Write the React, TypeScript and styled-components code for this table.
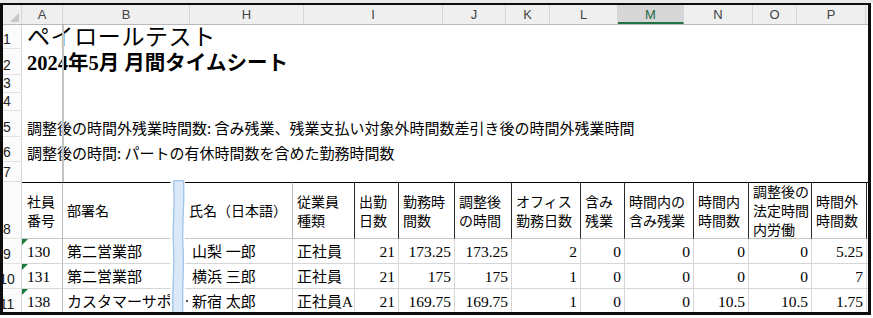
import styled, { createGlobalStyle } from 'styled-components';

const SANS = `"Liberation Sans", "Noto Sans CJK JP", sans-serif`;
const JP = `"Noto Sans CJK JP", sans-serif`;
const SERIF = `"Liberation Serif", "Noto Sans CJK JP", serif`;

const COLUMNS = [
  { label: 'A', w: 41 },
  { label: 'B', w: 127 },
  { label: 'H', w: 114 },
  { label: 'I', w: 139 },
  { label: 'J', w: 63 },
  { label: 'K', w: 44 },
  { label: 'L', w: 68 },
  { label: 'M', w: 66, active: true },
  { label: 'N', w: 69 },
  { label: 'O', w: 44 },
  { label: 'P', w: 69 },
];

const TOP_ROWS = [
  { n: 1, h: 24, kind: 'title', text: 'ペイロールテスト' },
  { n: 2, h: 26, kind: 'sub', text: '2024年5月 月間タイムシート' },
  { n: 3, h: 18 },
  { n: 4, h: 18 },
  {
    n: 5,
    h: 26,
    kind: 'note',
    text: '調整後の時間外残業時間数: 含み残業、残業支払い対象外時間数差引き後の時間外残業時間',
  },
  { n: 6, h: 25, kind: 'note', text: '調整後の時間: パートの有休時間数を含めた勤務時間数' },
  { n: 7, h: 20 },
];

const HEADERS = [
  { text: '社員\n番号', strong: false },
  { text: '部署名', strong: false },
  { text: '氏名（日本語）', strong: false },
  { text: '従業員\n種類', strong: true },
  { text: '出勤\n日数', strong: true },
  { text: '勤務時\n間数', strong: true },
  { text: '調整後\nの時間', strong: true },
  { text: 'オフィス\n勤務日数', strong: true },
  { text: '含み\n残業', strong: true },
  { text: '時間内の\n含み残業', strong: true },
  { text: '時間内\n時間数', strong: true },
  { text: '調整後の\n法定時間\n内労働', strong: true },
  { text: '時間外\n時間数', strong: true },
];

const ROWS = [
  {
    n: 9,
    id: '130',
    dept: '第二営業部',
    name: '山梨 一郎',
    type: '正社員',
    nums: ['21', '173.25', '173.25', '2', '0', '0', '0', '0', '5.25'],
  },
  {
    n: 10,
    id: '131',
    dept: '第二営業部',
    name: '横浜 三郎',
    type: '正社員',
    nums: ['21', '175', '175', '1', '0', '0', '0', '0', '7'],
  },
  {
    n: 11,
    id: '138',
    dept: 'カスタマーサポート',
    name: '新宿 太郎',
    type: '正社員A',
    nums: ['21', '169.75', '169.75', '1', '0', '0', '10.5', '10.5', '1.75'],
    cut: true,
  },
];

function Band() {
  return (
    <BandCol>
      <svg width="14" height="100%" viewBox="0 0 14 134" preserveAspectRatio="none">
        <path
          d="M2.5 1.5 Q2.5 0.5 4 0.5 L11 0.5 Q12.5 0.5 12.5 1.5 C14 24 10.5 44 12 67 C13.5 90 10.5 112 12 134 L2 134 C0.5 112 4 90 2.5 67 C1 44 4.5 24 2.5 1.5 Z"
          fill="#dbe8f7"
          stroke="#9fc4ea"
          strokeWidth="1.3"
        />
      </svg>
    </BandCol>
  );
}

function App() {
  return (
    <Page>
      <GlobalStyle />
      <Frame>
        <ColHeaderRow>
          <Corner />
          {COLUMNS.map((c) => (
            <ColHead key={c.label} $w={c.w} $active={!!c.active}>
              {c.label}
            </ColHead>
          ))}
          <ColHeadRest />
        </ColHeaderRow>

        <TopArea>
          {TOP_ROWS.map((r) => (
            <TopRow key={r.n} $h={r.h}>
              <RowHead>
                <RowNum>{r.n}</RowNum>
              </RowHead>
              {r.kind === 'title' && <Title>{r.text}</Title>}
              {r.kind === 'sub' && <SubTitle>{r.text}</SubTitle>}
              {r.kind === 'note' && <Note>{r.text}</Note>}
              {!r.kind && <div />}
            </TopRow>
          ))}
        </TopArea>

        <Table>
          <RowHead>
            <RowNum>8</RowNum>
          </RowHead>
          <HeadCell $strong={false} $first>
            {HEADERS[0].text}
          </HeadCell>
          <HeadCell $strong={false} $noRight>
            {HEADERS[1].text}
          </HeadCell>
          <Band />
          {HEADERS.slice(2).map((h) => (
            <HeadCell key={h.text} $strong={h.strong}>
              {h.text}
            </HeadCell>
          ))}
          <HeadRest />

          {ROWS.map((r) => (
            <Row key={r.n} r={r} />
          ))}
        </Table>
      </Frame>
    </Page>
  );
}

function Row({ r }: { r: (typeof ROWS)[number] }) {
  return (
    <>
      <RowHead>
        <RowNum>{r.n}</RowNum>
      </RowHead>
      <IdCell>{r.id}</IdCell>
      <TextCell $noRight>{r.dept}</TextCell>
      <NameCell $cut={!!r.cut}>{r.name}</NameCell>
      <TextCell>{r.type}</TextCell>
      {r.nums.map((v, i) => (
        <NumCell key={i}>{v}</NumCell>
      ))}
      <DataRest />
    </>
  );
}

export default App;

const GlobalStyle = createGlobalStyle`
  body {
    margin: 0;
    background: #ffffff;
  }
`;

const Page = styled.div`
  width: 873px;
  border-top: 3px solid #e7e9ec;
`;

const Frame = styled.div`
  width: 871px;
  height: 312px;
  box-sizing: border-box;
  border: 2px solid #0d0d0d;
  border-left-width: 3px;
  border-right-width: 3px;
  border-bottom-width: 3px;
  overflow: hidden;
  background: #ffffff;
`;

const ColHeaderRow = styled.div`
  display: flex;
  height: 20px;
  box-sizing: border-box;
  border-bottom: 1px solid #b9b9b9;
  background: #efefef;
`;

const Corner = styled.div`
  position: relative;
  flex: none;
  width: 19px;
  box-sizing: border-box;
  border-right: 1px solid #d6d6d6;

  &::after {
    content: '';
    position: absolute;
    right: 2px;
    bottom: 2px;
    border-left: 9px solid transparent;
    border-bottom: 9px solid #c7c7c7;
  }
`;

const ColHead = styled.div<{ $w: number; $active: boolean }>`
  flex: none;
  width: ${(p) => p.$w}px;
  box-sizing: border-box;
  display: flex;
  align-items: center;
  justify-content: center;
  border-right: 1px solid #d6d6d6;
  border-bottom: ${(p) => (p.$active ? '2px solid #217346' : 'none')};
  background: ${(p) => (p.$active ? '#d6d6d6' : 'transparent')};
  color: ${(p) => (p.$active ? '#1e6b40' : '#444444')};
  font: 13px ${SANS};
  padding-top: ${(p) => (p.$active ? '2px' : '0')};
`;

const ColHeadRest = styled.div`
  flex: 1;
`;

const TopArea = styled.div`
  position: relative;

  &::after {
    content: '';
    position: absolute;
    top: 0;
    bottom: 0;
    left: 59px;
    width: 2px;
    background: #c4c4c4;
  }
`;

const TopRow = styled.div<{ $h: number }>`
  display: grid;
  grid-template-columns: 19px 1fr;
  grid-template-rows: minmax(0, 1fr);
  height: ${(p) => p.$h}px;
`;

const RowHead = styled.div`
  display: flex;
  align-items: flex-end;
  overflow: hidden;
  box-sizing: border-box;
  background: #fbfbfb;
  border-right: 1px solid #d6d6d6;
  border-bottom: 1px solid #e2e2e2;
  font: 14px/16px ${SANS};
  color: #222222;
`;

const RowNum = styled.span`
  flex: none;
  width: 26px;
  margin-left: -9px;
  padding-bottom: 1px;
  text-align: center;
`;

const TextLine = styled.div`
  display: flex;
  align-items: flex-end;
  min-height: 0;
  padding-left: 5px;
  white-space: nowrap;
  color: #000000;
`;

const Title = styled(TextLine)`
  font: 23px/22px ${JP};
  letter-spacing: 0.6px;
  padding-bottom: 3px;
`;

const SubTitle = styled(TextLine)`
  font: bold 20.5px/24px ${SERIF};
`;

const Note = styled(TextLine)`
  font: 15px/18px ${JP};
`;

const Table = styled.div`
  display: grid;
  grid-template-columns: 19px 41px 108px 14px 108px 62px 44px 56px 57px 69px 44px 69px 55px 63px 55px 1fr;
  grid-template-rows: 57px repeat(3, 25px);
`;

const HeadCell = styled.div<{ $strong: boolean; $first?: boolean; $noRight?: boolean }>`
  display: flex;
  align-items: center;
  box-sizing: border-box;
  padding-left: ${(p) => (p.$first ? '5px' : '4px')};
  border-top: 1px solid #000000;
  border-bottom: 1px solid #c6c6c6;
  border-right: 1px solid
    ${(p) => (p.$noRight ? 'transparent' : p.$strong ? '#2a2a2a' : '#bdbdbd')};
  font: 14px/19px ${JP};
  color: #000000;
  white-space: pre;
`;

const HeadRest = styled.div`
  border-top: 1px solid #000000;
  border-bottom: 1px solid #c6c6c6;
`;

const BandCol = styled.div`
  grid-column: 4;
  grid-row: 1 / span 4;
  margin-top: -2px;
  position: relative;
  z-index: 1;
  display: flex;
`;

const DataCell = styled.div<{ $noRight?: boolean }>`
  position: relative;
  display: flex;
  align-items: flex-end;
  box-sizing: border-box;
  padding-bottom: 1px;
  overflow: hidden;
  white-space: nowrap;
  border-bottom: 1px solid #d6d6d6;
  border-right: 1px solid ${(p) => (p.$noRight ? 'transparent' : '#d6d6d6')};
  color: #000000;
`;

const IdCell = styled(DataCell)`
  padding-left: 5px;
  font: 15.5px/20px ${SERIF};
  border-right-color: #bdbdbd;

  &::before {
    content: '';
    position: absolute;
    top: 0;
    left: 0;
    border-top: 6px solid #1d7a3c;
    border-right: 6px solid transparent;
  }
`;

const TextCell = styled(DataCell)`
  padding-left: 4px;
  font: 15px/20px ${SERIF};
`;

const NameCell = styled(TextCell)<{ $cut: boolean }>`
  padding-left: 7px;

  &::before {
    content: '';
    display: ${(p) => (p.$cut ? 'block' : 'none')};
    position: absolute;
    left: 1px;
    bottom: 11px;
    width: 2px;
    height: 2px;
    background: #555555;
  }
`;

const NumCell = styled(DataCell)`
  justify-content: flex-end;
  padding-right: 3px;
  font: 15.5px/20px ${SERIF};
`;

const DataRest = styled.div`
  border-bottom: 1px solid #d6d6d6;
`;
